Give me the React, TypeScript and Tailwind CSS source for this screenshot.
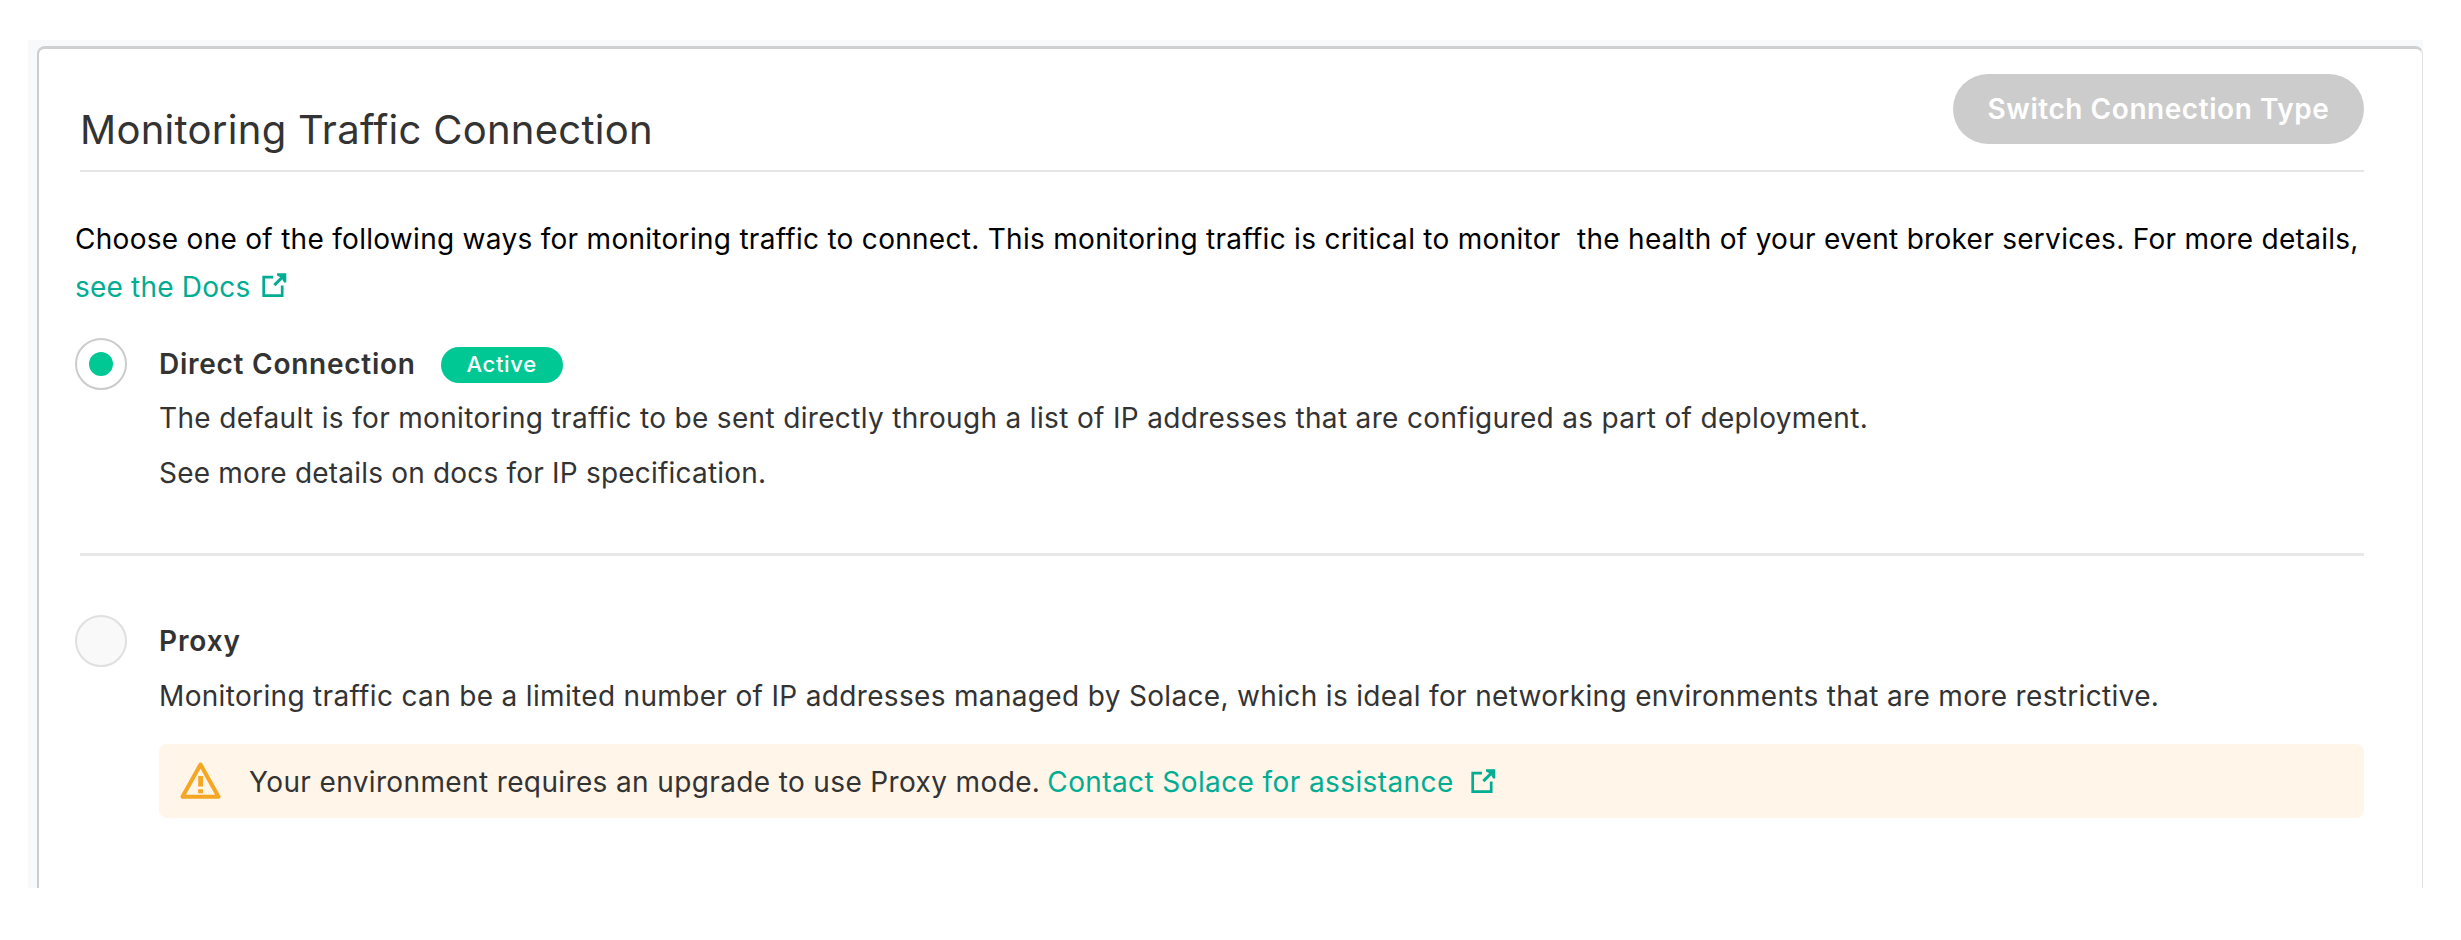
import React from 'react';

function ExternalLinkIcon({ className }: { className: string }) {
  return (
    <svg className={className} viewBox="0 0 25 25" fill="none" stroke="#00ad93" strokeWidth="2.7">
      <path d="M11 4.2H1.7V22.7H20.2V12.5" />
      <path d="M22 2.5L12.4 12.1" strokeWidth="3" />
      <path d="M15 0.2H24.3V9.5H22L20.5 6.5L18 4L15 2.6Z" fill="#00ad93" stroke="none" />
    </svg>
  );
}

function WarningIcon() {
  return (
    <svg className="ml-[21px] h-[38px] w-[41px] shrink-0" viewBox="0 0 41 38" fill="none" stroke="#f5a623">
      <path d="M20.5 2.5L38.5 34.8H2.5Z" strokeWidth="4" strokeLinejoin="round" />
      <path d="M20.6 14V24.5M20.6 27.2V31.2" strokeWidth="4.8" />
    </svg>
  );
}

function Radio({ checked }: { checked?: boolean }) {
  return checked ? (
    <div className="flex h-[52px] w-[52px] shrink-0 items-center justify-center rounded-full border-2 border-[#cccccc] bg-white">
      <div className="h-6 w-6 rounded-full bg-[#00c895]" />
    </div>
  ) : (
    <div className="h-[52px] w-[52px] shrink-0 rounded-full border-2 border-[#e0e0e0] bg-[#f9f9f9]" />
  );
}

export default function App() {
  return (
    <div className="h-[940px] w-[2461px] overflow-hidden bg-white pt-10 pl-7 font-['Inter',sans-serif] text-[28px] whitespace-nowrap text-[#333333]">
      <main className="h-[848px] w-[2395px] overflow-hidden bg-[#f8f9fb] pt-[6px] pl-[9px]">
        <section className="h-[860px] w-[2386px] rounded-[8px] border-t-3 border-r border-l-2 border-t-[#cfcfcf] border-r-[#e0e0e0] border-l-[#cccccc] bg-white pt-[25px] pr-[58px] pl-9">
          <header className="ml-[5px] flex h-[98px] justify-between border-b-2 border-[#e6e6e6]">
            <h1 className="mt-[24px] text-[40px] leading-[64px] tracking-[0.28px]">Monitoring Traffic Connection</h1>
            <button className="h-[70px] w-[411px] rounded-full bg-[#cccccc] text-[28px] font-semibold leading-[69px] tracking-[0.55px] text-white">
              Switch Connection Type
            </button>
          </header>
          <div className="mt-[43px] leading-[48px] text-black">
            <p className="tracking-[0.289px]">
              Choose one of the following ways for monitoring traffic to connect. This monitoring traffic is critical to monitor&nbsp; the health of your event broker services. For more details,
            </p>
            <a className="flex text-[#00ad93]">
              <span className="tracking-[0.2px]">see the Docs</span>
              <ExternalLinkIcon className="mt-[10px] ml-[12px] h-[25px] w-[25px]" />
            </a>
          </div>

          <div className="mt-[27px] flex h-[215px]">
            <Radio checked />
            <div className="ml-[32px]">
              <div className="flex h-[53px]">
                <span className="font-semibold leading-[53px] tracking-[0.74px]">Direct Connection</span>
                <span className="mt-[9px] ml-[25px] h-9 w-[122px] rounded-full bg-[#00c895] text-center text-[22px] font-medium leading-[35px] tracking-[0.7px] text-white">
                  Active
                </span>
              </div>
              <p className="leading-[55px] tracking-[0.333px]">
                The default is for monitoring traffic to be sent directly through a list of IP addresses that are configured as part of deployment.
              </p>
              <p className="leading-[55px] tracking-[0.2px]">See more details on docs for IP specification.</p>
            </div>
          </div>

          <hr className="ml-[5px] border-t-3 border-[#e8e8e8]" />

          <div className="mt-[59px] flex">
            <Radio />
            <div className="ml-[32px] flex-1">
              <p className="h-[54px] font-semibold leading-[53px] tracking-[0.9px]">Proxy</p>
              <p className="leading-[55px] tracking-[0.333px]">
                Monitoring traffic can be a limited number of IP addresses managed by Solace, which is ideal for networking environments that are more restrictive.
              </p>
              <div className="mt-[20px] flex h-[74px] items-center rounded-[8px] bg-[#fff5e8] leading-[74px]">
                <WarningIcon />
                <span className="mt-[2px] ml-[28px] tracking-[0.37px]">Your environment requires an upgrade to use Proxy mode.</span>
                <a className="ml-[7px] flex items-center text-[#00ad93]">
                  <span className="mt-[2px] tracking-[0.4px]">Contact Solace for assistance</span>
                  <ExternalLinkIcon className="ml-[17px] h-[25px] w-[25px]" />
                </a>
              </div>
            </div>
          </div>
        </section>
      </main>
    </div>
  );
}
